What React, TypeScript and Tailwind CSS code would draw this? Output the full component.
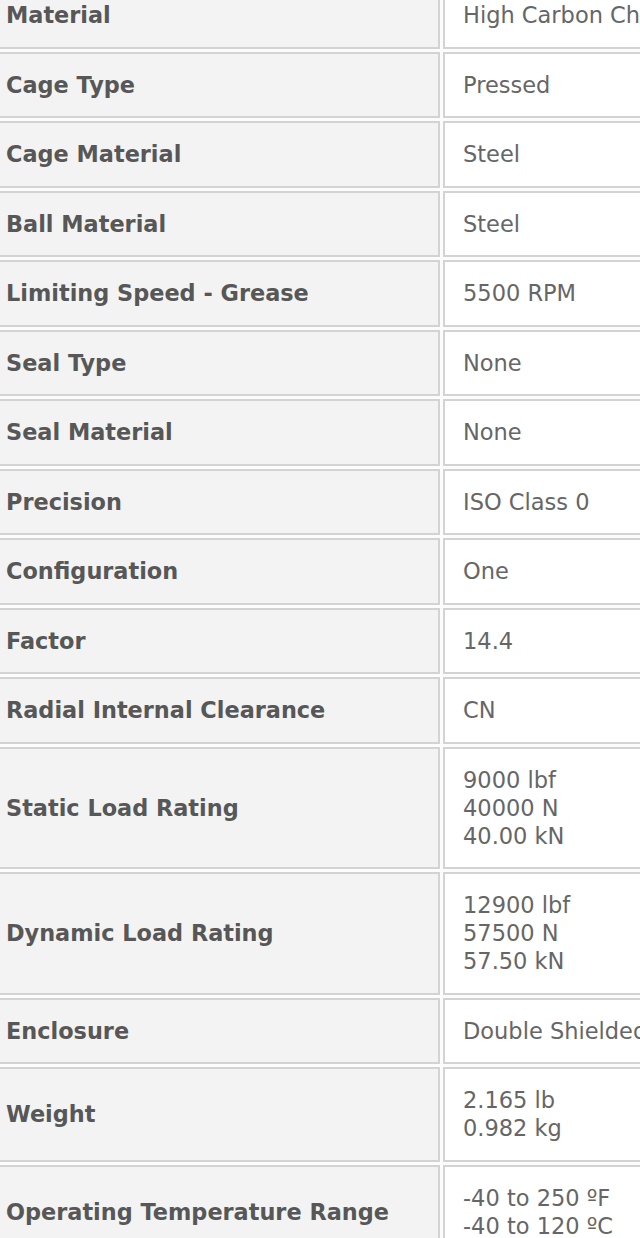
const specs: { label: string; value: string[] }[] = [
  { label: 'Material', value: ['High Carbon Chrome Steel'] },
  { label: 'Cage Type', value: ['Pressed'] },
  { label: 'Cage Material', value: ['Steel'] },
  { label: 'Ball Material', value: ['Steel'] },
  { label: 'Limiting Speed - Grease', value: ['5500 RPM'] },
  { label: 'Seal Type', value: ['None'] },
  { label: 'Seal Material', value: ['None'] },
  { label: 'Precision', value: ['ISO Class 0'] },
  { label: 'Configuration', value: ['One'] },
  { label: 'Factor', value: ['14.4'] },
  { label: 'Radial Internal Clearance', value: ['CN'] },
  { label: 'Static Load Rating', value: ['9000 lbf', '40000 N', '40.00 kN'] },
  { label: 'Dynamic Load Rating', value: ['12900 lbf', '57500 N', '57.50 kN'] },
  { label: 'Enclosure', value: ['Double Shielded'] },
  { label: 'Weight', value: ['2.165 lb', '0.982 kg'] },
  { label: 'Operating Temperature Range', value: ['-40 to 250 ºF', '-40 to 120 ºC'] },
]

export default function App() {
  return (
    <div className="w-[640px] h-[1238px] overflow-hidden bg-[#fcfcfc]">
      <table
        className="-mt-[21px] -ml-[15px] border-separate border-spacing-[3px] w-[880px] table-fixed"
        style={{ fontFamily: '"DejaVu Sans", Verdana, sans-serif' }}
      >
        <colgroup>
          <col className="w-[452px]" />
          <col />
        </colgroup>
        <tbody>
          {specs.map((row) => (
            <tr key={row.label}>
              <td className="border-2 border-[#d3d3d3] bg-[#f3f3f3] pl-[16px] pr-2 py-[17.25px] align-middle text-[22.4px] leading-[28px] font-bold text-[#575757] whitespace-nowrap">
                {row.label}
              </td>
              <td className="border-2 border-[#d3d3d3] bg-white pl-[18px] pr-2 py-[17.25px] align-middle text-[22.5px] leading-[28px] text-[#666666] whitespace-nowrap">
                {row.value.map((v) => (
                  <div key={v}>{v}</div>
                ))}
              </td>
            </tr>
          ))}
        </tbody>
      </table>
    </div>
  )
}
